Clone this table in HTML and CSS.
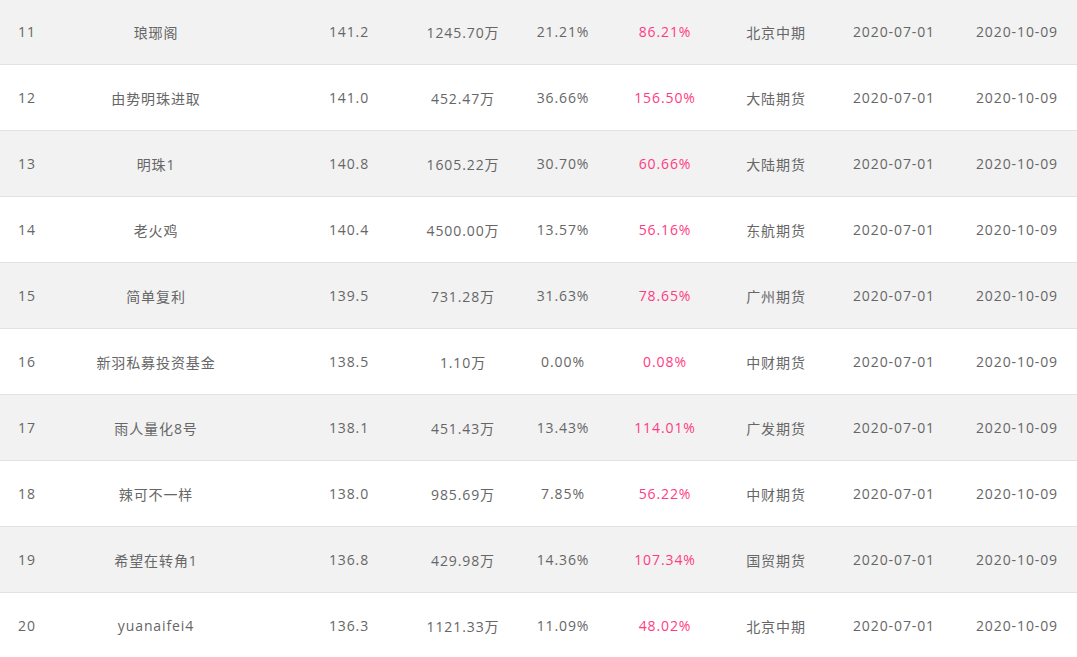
FILE: index.html
```html
<!DOCTYPE html>
<html lang="zh-CN">
<head>
<meta charset="utf-8">
<title>排行榜</title>
<link rel="stylesheet" href="styles.css">
</head>
<body>
<div class="table">
  <div class="row odd"><span class="c">11</span><span class="c">琅琊阁</span><span class="c">141.2</span><span class="c">1245.70万</span><span class="c">21.21%</span><span class="c pink">86.21%</span><span class="c">北京中期</span><span class="c">2020-07-01</span><span class="c">2020-10-09</span></div>
  <div class="row"><span class="c">12</span><span class="c">由势明珠进取</span><span class="c">141.0</span><span class="c">452.47万</span><span class="c">36.66%</span><span class="c pink">156.50%</span><span class="c">大陆期货</span><span class="c">2020-07-01</span><span class="c">2020-10-09</span></div>
  <div class="row odd"><span class="c">13</span><span class="c">明珠1</span><span class="c">140.8</span><span class="c">1605.22万</span><span class="c">30.70%</span><span class="c pink">60.66%</span><span class="c">大陆期货</span><span class="c">2020-07-01</span><span class="c">2020-10-09</span></div>
  <div class="row"><span class="c">14</span><span class="c">老火鸡</span><span class="c">140.4</span><span class="c">4500.00万</span><span class="c">13.57%</span><span class="c pink">56.16%</span><span class="c">东航期货</span><span class="c">2020-07-01</span><span class="c">2020-10-09</span></div>
  <div class="row odd"><span class="c">15</span><span class="c">简单复利</span><span class="c">139.5</span><span class="c">731.28万</span><span class="c">31.63%</span><span class="c pink">78.65%</span><span class="c">广州期货</span><span class="c">2020-07-01</span><span class="c">2020-10-09</span></div>
  <div class="row"><span class="c">16</span><span class="c">新羽私募投资基金</span><span class="c">138.5</span><span class="c">1.10万</span><span class="c">0.00%</span><span class="c pink">0.08%</span><span class="c">中财期货</span><span class="c">2020-07-01</span><span class="c">2020-10-09</span></div>
  <div class="row odd"><span class="c">17</span><span class="c">雨人量化8号</span><span class="c">138.1</span><span class="c">451.43万</span><span class="c">13.43%</span><span class="c pink">114.01%</span><span class="c">广发期货</span><span class="c">2020-07-01</span><span class="c">2020-10-09</span></div>
  <div class="row"><span class="c">18</span><span class="c">辣可不一样</span><span class="c">138.0</span><span class="c">985.69万</span><span class="c">7.85%</span><span class="c pink">56.22%</span><span class="c">中财期货</span><span class="c">2020-07-01</span><span class="c">2020-10-09</span></div>
  <div class="row odd"><span class="c">19</span><span class="c">希望在转角1</span><span class="c">136.8</span><span class="c">429.98万</span><span class="c">14.36%</span><span class="c pink">107.34%</span><span class="c">国贸期货</span><span class="c">2020-07-01</span><span class="c">2020-10-09</span></div>
  <div class="row"><span class="c">20</span><span class="c">yuanaifei4</span><span class="c">136.3</span><span class="c">1121.33万</span><span class="c">11.09%</span><span class="c pink">48.02%</span><span class="c">北京中期</span><span class="c">2020-07-01</span><span class="c">2020-10-09</span></div>
</div>
</body>
</html>
```
FILE: styles.css
```css
html, body {
  margin: 0;
  padding: 0;
  background: #fff;
}
body {
  font-family: "Open Sans", "Noto Sans CJK SC", sans-serif;
  font-size: 14px;
  color: #666;
  overflow: hidden;
}
.table {
  margin-top: -1px;
}
.row {
  display: flex;
  align-items: center;
  height: 65px;
  border-bottom: 1px solid #e2e2e6;
  background: #fff;
}
.row.odd {
  background: #f2f2f2;
}
.c {
  flex: none;
  width: 90px;
  text-align: center;
  white-space: nowrap;
  letter-spacing: 0.9px;
}
.c:nth-child(1) { width: 54px; }
.c:nth-child(2) { width: 130px; margin-left: 37px; }
.c:nth-child(3) { margin-left: 83px; }
.c:nth-child(4) { margin-left: 24px; }
.c:nth-child(5) { margin-left: 10px; }
.c:nth-child(6) { margin-left: 12px; }
.c:nth-child(7) { margin-left: 21px; }
.c:nth-child(8) { margin-left: 28px; }
.c:nth-child(9) { margin-left: 33px; }
.pink {
  color: #ff3b82;
}
```
